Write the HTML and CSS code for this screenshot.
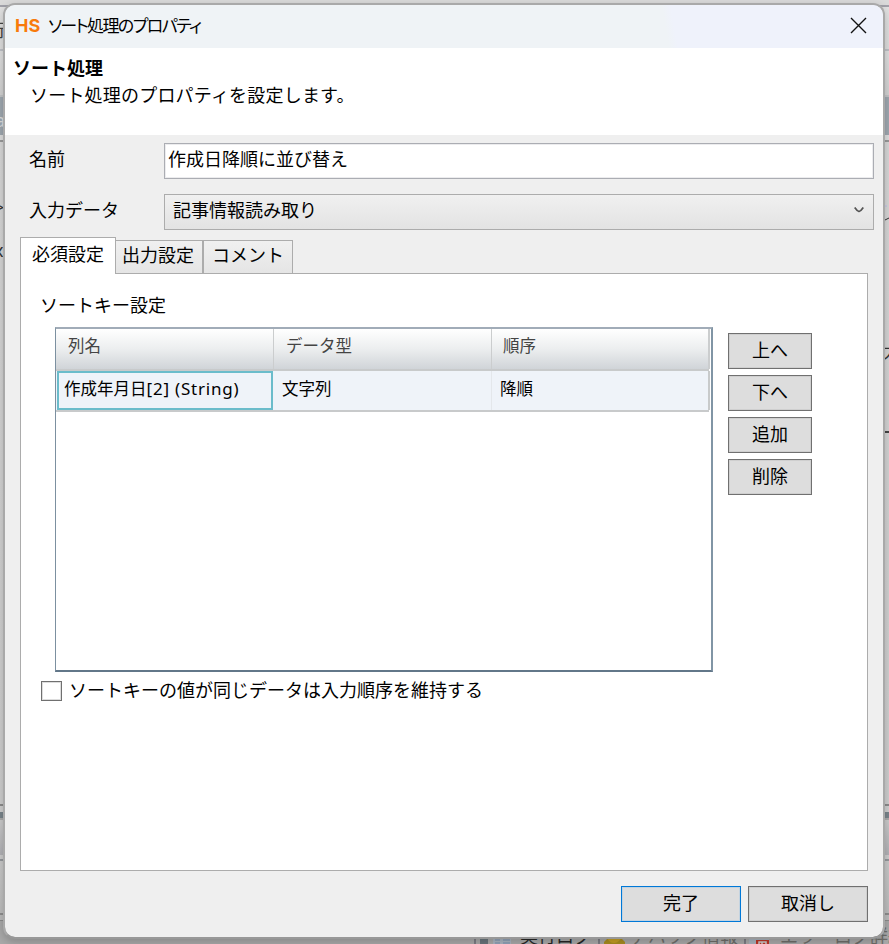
FILE: index.html
```html
<!DOCTYPE html>
<html lang="ja">
<head>
    <meta charset="UTF-8">
    <meta name="viewport" content="width=device-width, initial-scale=1.0">
    <title>ソート処理のプロパティ</title>
    <link rel="stylesheet" href="styles.css">
</head>
<body>
    <!-- editor window behind the dialog -->
    <div class="editor">
        <div class="menu-row"></div>
        <div class="tool-row"><span>行</span></div>
        <div class="sub-row"></div>
        <div class="caption-row"><span>a</span></div>
        <div class="canvas">
            <div class="canvas-left">
                <span>&gt;</span>
                <span>xc</span>
            </div>
            <div class="canvas-right">
                <svg class="flow-line" width="6" height="20" viewBox="0 0 6 20"><path d="M0 1h4" stroke="#c0c0ec"/><path d="M0 16l6-3" stroke="#333"/></svg>
                <span>大</span>
                <div class="node-line"></div>
            </div>
        </div>
        <div class="splitter"></div>
        <div class="pane-title"></div>
        <div class="pane-body"></div>
        <div class="log-tabs">
            <div class="log-tab run">
                <svg width="44" height="24" viewBox="0 0 44 24"><path d="M4 0h8v24H4z" fill="#69747b"/><path d="M17 0h18v24H17z" fill="#aab4c0"/><path d="M19 19h5M27 19h7M19 22h5M27 22h7" stroke="#7890ae"/></svg>
                <span>実行ログ</span>
            </div>
            <div class="log-tab debug">
                <svg width="28" height="24" viewBox="0 0 28 24"><path d="M4 24v-3l3-3h15l3 3v3z" fill="#a88d20"/><circle cx="14" cy="15" r="7" fill="#c49e24"/><path d="M10 15h8v3h-8z" fill="#333"/></svg>
                <span>デバッグ情報</span>
            </div>
            <div class="log-tab error">
                <svg width="34" height="24" viewBox="0 0 34 24"><path d="M3 0h20v24H3z" fill="#a9b3bd"/><path d="M10 19h13v5H10z" fill="#bd3527"/><path d="M13 24v-3h3v3m0-3h4v3" stroke="#ccc" stroke-width="1.500" fill="none"/></svg>
                <span>エラーログ詳細</span>
            </div>
        </div>
    </div>

    <div class="dialog">
        <div class="titlebar">
            <span class="logo">HS</span>
            <span class="title">ソート処理のプロパティ</span>
            <svg class="close" width="17" height="17" viewBox="0 0 17 17"><path d="M1 1l15 15M16 1L1 16" stroke="#111" stroke-width="1.4" fill="none"/></svg>
        </div>

        <div class="heading">
            <h1>ソート処理</h1>
            <p>ソート処理のプロパティを設定します。</p>
        </div>

        <div class="fields">
            <label for="name">名前</label>
            <input type="text" id="name" value="作成日降順に並び替え">
            <label>入力データ</label>
            <div class="select">
                <span>記事情報読み取り</span>
                <svg width="10" height="6" viewBox="0 0 10 6"><path d="M.7 .5Q3 4 5 4.500Q7 4 9.300 .5" stroke="#555" stroke-width="1.800" fill="none"/></svg>
            </div>
        </div>

        <div class="tabs">
            <div class="tab active">必須設定</div>
            <div class="tab output">出力設定</div>
            <div class="tab comment">コメント</div>
        </div>

        <div class="panel">
            <div class="group-title">ソートキー設定</div>
            <div class="key-area">
                <div class="table">
                    <div class="row head">
                        <div>列名</div>
                        <div>データ型</div>
                        <div>順序</div>
                    </div>
                    <div class="row">
                        <div class="selected">作成年月日<span class="type">[2] (String)</span></div>
                        <div>文字列</div>
                        <div>降順</div>
                    </div>
                </div>
                <div class="side-buttons">
                    <button>上へ</button>
                    <button>下へ</button>
                    <button>追加</button>
                    <button>削除</button>
                </div>
            </div>
            <label class="check">
                <input type="checkbox">
                <span>ソートキーの値が同じデータは入力順序を維持する</span>
            </label>
        </div>

        <div class="footer">
            <button class="default">完了</button>
            <button>取消し</button>
        </div>
    </div>
</body>
</html>
```
FILE: styles.css
```css
* {
    box-sizing: border-box;
}
body {
    margin: 0;
    width: 889px;
    height: 944px;
    overflow: hidden;
    position: relative;
    font-family: "Noto Sans", "Noto Sans CJK JP", sans-serif;
    font-size: 18px;
    line-height: 24px;
    color: #000;
    white-space: nowrap;
}

/* editor behind */
.editor {
    height: 944px;
    display: flex;
    flex-direction: column;
    overflow: hidden;
    background: #d4d4d4;
}
.menu-row {
    height: 7px;
    background: #dadada;
    border-bottom: 2px solid #a2a2aa;
}
.tool-row {
    height: 44px;
    padding-top: 11px;
    background: linear-gradient(#e2e2e2, #ddd);
    border-bottom: 2px solid #bfc1c6;
    color: #444;
}
.tool-row span {
    margin-left: -12px;
}
.sub-row {
    height: 46px;
    background: linear-gradient(#e0e0e0, #d2d2d2);
    border-bottom: 2px solid #c2c4c6;
}
.caption-row {
    height: 38px;
    padding-top: 11px;
    background: #9fa8b0;
    color: #ddd;
}
.caption-row span {
    margin-left: -5px;
}
.canvas {
    height: 671px;
    display: flex;
    justify-content: space-between;
    background: linear-gradient(#dedede 5px, #999 5px, #999 7px, #d8d8d8 7px, #cecece);
    border-bottom: 2px solid #8c8c8c;
    color: #333;
}
.canvas-left {
    display: flex;
    flex-direction: column;
    width: 5px;
    gap: 19px;
    padding-top: 60px;
}
.canvas-left span {
    margin-left: -6px;
}
.canvas-right {
    width: 6px;
    padding-top: 70px;
}
.canvas-right span {
    display: block;
    margin-top: 114px;
}
.flow-line {
    display: block;
}
.node-line {
    height: 2px;
    margin-top: 68px;
    background: #444;
}
.splitter {
    height: 14px;
    background: linear-gradient(#cfcfcf 6px, #79848b 6px, #79848b 12px, #aaa 12px);
}
.pane-title {
    height: 41px;
    background: linear-gradient(#cbcbcb, #b1b1b5 35px, #ccc 35px);
    border-bottom: 2px solid #95989c;
}
.pane-body {
    height: 59px;
    background: linear-gradient(#c9c9c9, #bdbdbd 52px, #8e8e8e 52px, #8e8e8e 54px, #bbb 54px);
}
.log-tabs {
    display: flex;
    height: 24px;
    padding-left: 474px;
    background: #a9a9a9;
    border-top: 1px solid #8c8c8c;
    line-height: 30px;
    color: #6e6e6a;
}
.log-tab {
    display: flex;
    flex: none;
    border-left: 2px solid #7d7d84;
}
.log-tab svg {
    flex: none;
}
.log-tab.run {
    width: 124px;
    color: #262626;
}
.log-tab.debug {
    width: 146px;
}
.log-tab.debug span {
    margin-left: 2px;
}

/* dialog */
.dialog {
    position: absolute;
    left: 3px;
    top: 3px;
    width: 882px;
    height: 936px;
    border: 2px solid #a9a9a9;
    border-bottom-color: #989898;
    border-radius: 12px;
    background: #efefef;
    background-clip: padding-box;
    overflow: hidden;
    box-shadow: 0 3px 10px rgba(0, 0, 0, 0.2);
}
.titlebar {
    height: 43px;
    display: flex;
    align-items: center;
    padding: 0 16px 2px 10px;
    background: linear-gradient(80deg, #eff3f6 75%, #eff2fb 76%);
}
.logo {
    width: 33px;
    font-family: Inter, sans-serif;
    font-size: 18px;
    font-weight: 700;
    color: #f87a0c;
}
.title {
    flex: 1;
    font-size: 17px;
    font-feature-settings: "palt";
    letter-spacing: -1.6px;
}
.heading {
    height: 87px;
    padding: 8px 8px 0;
    background: #fff;
}
.heading h1 {
    margin: 0;
    font-size: 18px;
    line-height: 24px;
}
.heading p {
    margin: 3px 0 0 17px;
    letter-spacing: 0.2px;
}
.fields {
    display: grid;
    grid-template-columns: 135px 710px;
    grid-template-rows: 36px 36px;
    row-gap: 15px;
    padding: 8px 0 0 24px;
}
.fields label {
    padding-top: 4px;
}
.fields input {
    padding: 0 3px 4px;
    border: 1px solid #abadb3;
    border-radius: 0;
    box-shadow: inset 0 0 0 1px #ececee;
    font: inherit;
    color: #000;
}
.select {
    display: flex;
    justify-content: space-between;
    align-items: center;
    padding: 0 9px 4px 8px;
    border: 1px solid #acacac;
    background: linear-gradient(#f0f0f0, #e3e3e3);
}
.tabs {
    display: flex;
    align-items: flex-end;
    height: 37px;
    margin: 7px 0 -1px 15px;
}
.tab {
    height: 34px;
    padding-top: 2px;
    border: 1px solid #acacac;
    background: linear-gradient(#f0f0f0, #e5e5e5);
    text-align: center;
}
.tab.active {
    z-index: 1;
    width: 96px;
    height: 37px;
    padding-top: 4px;
    border-bottom: 0;
    background: #fff;
}
.tab.output {
    width: 88px;
    margin-left: -1px;
    padding-right: 2px;
}
.tab.comment {
    width: 90px;
}
.panel {
    width: 848px;
    height: 598px;
    margin-left: 15px;
    padding: 19px 19px 0;
    border: 1px solid #acacac;
    background: #fff;
}
.key-area {
    display: flex;
    gap: 15px;
    margin: 10px 0 0 15px;
}
.table {
    width: 658px;
    height: 345px;
    padding-right: 2px;
    border: 2px solid;
    border-color: #a1acb8 #8195a5 #627789 #7c90a0;
    border-left-width: 1px;
    font-size: 16.5px;
}
.row {
    display: grid;
    grid-template-columns: 218px 218px 218px;
    height: 41px;
    background: #eff3f9;
    border-bottom: 2px solid #c8cacb;
}
.row div {
    padding: 6px 0 0 8px;
    border-right: 1px solid #e4e7eb;
}
.row div:last-child {
    border-right: 2px solid #c8cacb;
}
.row.head {
    height: 42px;
    background: linear-gradient(#fff, #eceeef 50%, #d0d4d8);
    color: #444;
}
.row.head div {
    padding: 5px 0 0 12px;
    border-right-color: #cbcdce;
}
.row.head div:last-child {
    padding-left: 11px;
}
.row .selected {
    margin: 0 1px;
    padding: 4px 0 0 5px;
    border: 2px solid #6bbccb;
}
.type {
    font-size: 17px;
    letter-spacing: 0.8px;
}
.side-buttons {
    display: flex;
    flex-direction: column;
    gap: 6px;
    padding-top: 6px;
}
button {
    width: 84px;
    height: 36px;
    padding: 0 0 2px;
    border: 1px solid #707070;
    border-radius: 0;
    box-shadow: inset 0 0 0 1px #cfcfcf;
    background: #ddd;
    font: inherit;
    color: #000;
}
.check {
    display: flex;
    align-items: center;
    gap: 7px;
    margin: 6px 0 0 1px;
}
.check input {
    appearance: none;
    width: 21px;
    height: 20px;
    margin: 1px 0 0;
    border: 1px solid #707070;
    box-shadow: inset 0 0 0 1px #ddd;
    background: #fff;
}
.footer {
    display: flex;
    justify-content: flex-end;
    gap: 7px;
    padding: 15px 15px 0 0;
}
.footer button {
    width: 120px;
}
.footer .default {
    border-color: #0078d7;
    box-shadow: inset 0 0 0 1px #c3d3e0;
}
```
